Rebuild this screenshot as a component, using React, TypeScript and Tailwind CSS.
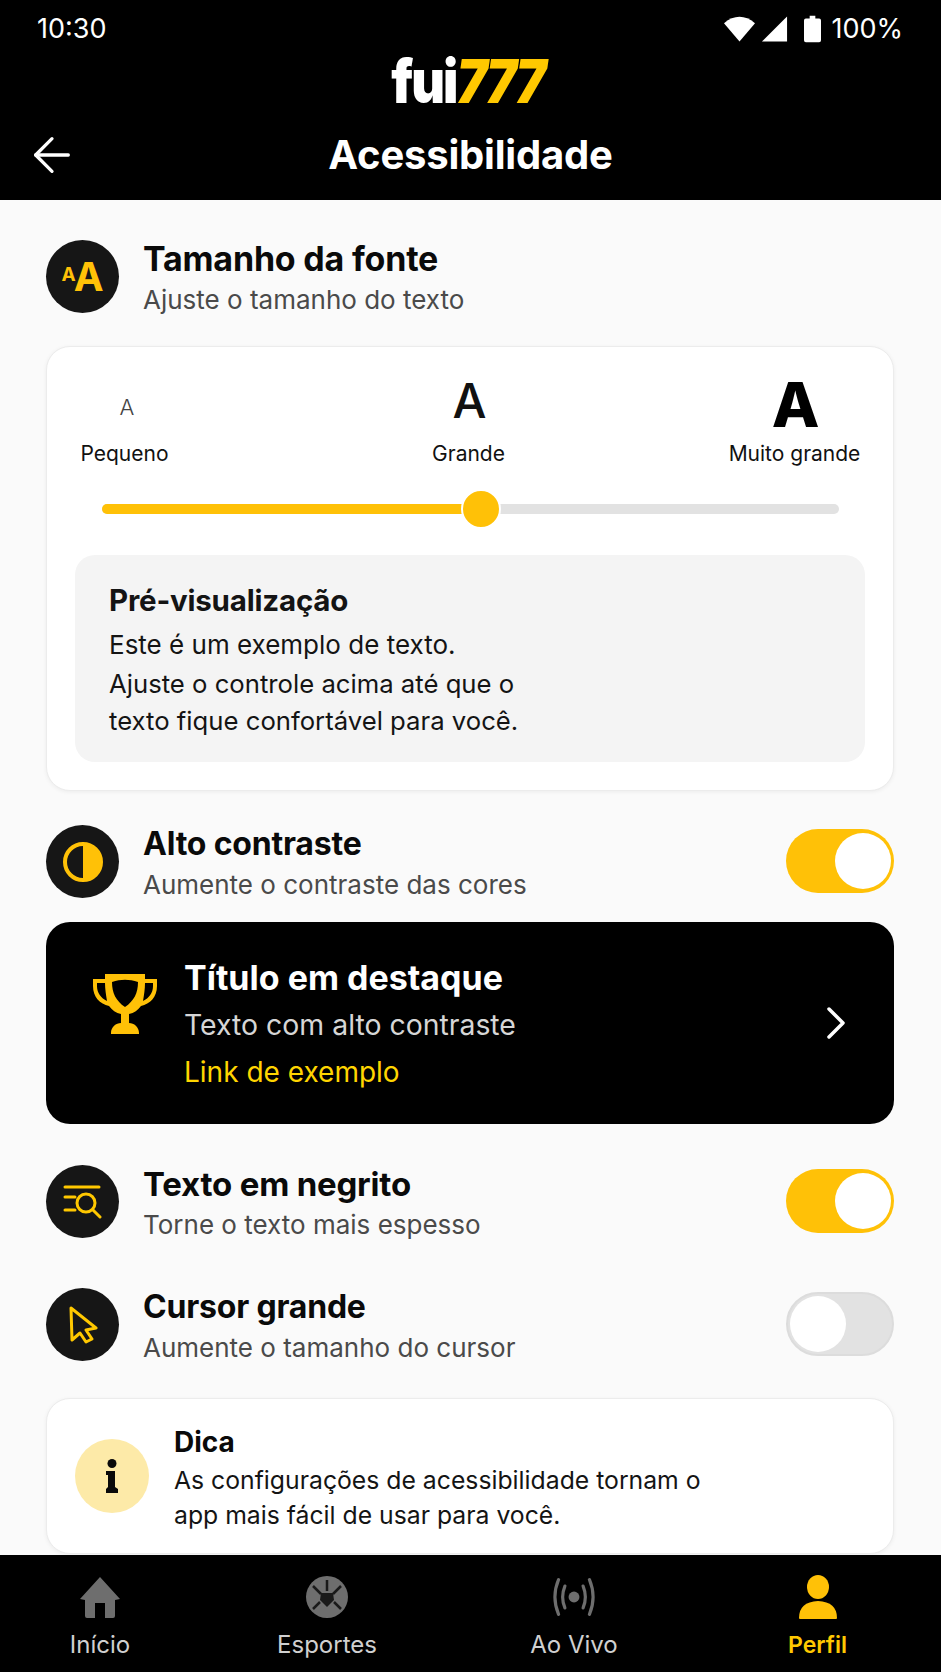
import { ArrowLeft, ChevronRight } from "lucide-react";
import type { ReactNode } from "react";

const IconCircle = ({ children }: { children: ReactNode }) => (
  <div className="flex h-[73px] w-[73px] shrink-0 items-center justify-center rounded-full bg-[#161616]">
    {children}
  </div>
);

const Toggle = ({ on }: { on: boolean }) =>
  on ? (
    <div className="-mt-[2px] flex h-[64px] w-[108px] shrink-0 items-center justify-end rounded-full bg-[#ffc107] pr-[3px]">
      <div className="h-[56px] w-[56px] rounded-full bg-white" />
    </div>
  ) : (
    <div className="-mt-[2px] flex h-[64px] w-[108px] shrink-0 items-center rounded-full border-2 border-[#dcdcdc] bg-[#e2e2e2] pl-[2px]">
      <div className="h-[56px] w-[56px] rounded-full bg-white" />
    </div>
  );

interface SettingRowProps {
  icon: ReactNode;
  title: string;
  titleSize?: string;
  subtitle: string;
  on?: boolean;
  className?: string;
}

const SettingRow = ({ icon, title, titleSize = "text-[33px]", subtitle, on, className = "" }: SettingRowProps) => (
  <div className={`flex h-[73px] items-center ${className}`}>
    <IconCircle>{icon}</IconCircle>
    <div className="ml-[24px] mt-[2px] flex-1">
      <p className={`${titleSize} font-bold leading-[38px] tracking-[-0.2px] text-[#0a0a0a]`}>{title}</p>
      <p className="mt-[6px] text-[26px] leading-[32px] text-[#4a4a4a]">{subtitle}</p>
    </div>
    {on !== undefined && <Toggle on={on} />}
  </div>
);

const navItems = [
  {
    label: "Início",
    color: "text-[24px] text-[#d0d0d0]",
    icon: (
      <svg viewBox="0 0 44 44" className="h-[44px] w-[44px]" fill="#6e6e6e">
        <path d="M22 2 L42 24 L37 25 V41 Q37 43 35 43 H27 V28 H17 V43 H9 Q7 43 7 41 V25 L2 24 Z" />
      </svg>
    ),
  },
  {
    label: "Esportes",
    color: "text-[24px] text-[#d0d0d0]",
    icon: (
      <svg viewBox="0 0 44 44" className="h-[44px] w-[44px]">
        <circle cx="22" cy="22" r="21" fill="#6e6e6e" />
        <path d="M16 18 L28 18 L29 25 L22 32 L15 25 Z" fill="#1a1a1a" />
        <path
          d="M22 5 V16 M8 11 L16 19 M36 11 L28 19 M8 34 L15 27 M36 34 L29 27"
          stroke="#1a1a1a"
          strokeWidth="2.5"
          fill="none"
        />
      </svg>
    ),
  },
  {
    label: "Ao Vivo",
    color: "text-[24px] text-[#d0d0d0]",
    icon: (
      <svg viewBox="0 0 48 44" className="h-[40px] w-[46px]" fill="none" stroke="#6e6e6e" strokeWidth="3.5" strokeLinecap="round">
        <circle cx="24" cy="22" r="6" fill="#6e6e6e" stroke="none" />
        <path d="M14 10 Q9 22 14 34 M34 10 Q39 22 34 34" />
        <path d="M7 3 Q-1 22 7 41 M41 3 Q49 22 41 41" />
      </svg>
    ),
  },
  {
    label: "Perfil",
    color: "text-[23px] text-[#ffc800] font-semibold",
    icon: (
      <svg viewBox="0 0 44 44" className="h-[44px] w-[44px]" fill="#ffc107">
        <ellipse cx="22" cy="12" rx="11" ry="12" />
        <path d="M3 43 Q3 27 22 26 Q41 27 41 43 Q41 44 40 44 H4 Q3 44 3 43 Z" />
      </svg>
    ),
  },
];

export default function App() {
  return (
    <div className="flex h-[1672px] w-[941px] flex-col overflow-hidden bg-[#fafafa] font-['Inter',sans-serif]">
      <header className="relative h-[200px] shrink-0 bg-black text-white">
        <div className="flex items-center justify-between pl-[37px] pr-[38px] pt-[13px]">
          <span className="text-[27px] leading-[32px]">10:30</span>
          <div className="flex items-center">
            <svg viewBox="0 0 34 28" className="h-[28px] w-[33px]" fill="white">
              <path d="M1 8 Q17 -5 33 8 L17 27 Z" />
            </svg>
            <svg viewBox="0 0 28 28" className="ml-[5px] h-[28px] w-[27px]" fill="white">
              <path d="M27 1 V27 H1 Z" />
            </svg>
            <svg viewBox="0 0 18 28" className="ml-[16px] h-[28px] w-[17px]" fill="white">
              <path d="M6 0 H12 V3 H16 Q18 3 18 5 V26 Q18 28 16 28 H2 Q0 28 0 26 V5 Q0 3 2 3 H6 Z" />
            </svg>
            <span className="ml-[10px] text-[27px] leading-[32px]">100%</span>
          </div>
        </div>
        <div className="mt-[8px] flex h-[58px] scale-y-[1.15] items-center justify-center pr-[6px] text-[52px] font-black leading-none tracking-[-2px]">
          <span>fui</span>
          <span className="italic tracking-[-2.5px] text-[#ffc800]">777</span>
        </div>
        <div className="relative mt-[21px] flex h-[46px] items-center justify-center">
          <ArrowLeft className="absolute left-[24px] h-[56px] w-[56px]" strokeWidth={1.4} />
          <h1 className="text-[40px] font-bold tracking-[-0.2px]">Acessibilidade</h1>
        </div>
      </header>

      <main className="flex-1 overflow-hidden pl-[46px] pr-[47px] pt-[40px]">
        <SettingRow
          title="Tamanho da fonte"
          titleSize="text-[34px]"
          subtitle="Ajuste o tamanho do texto"
          icon={
            <div className="flex items-center font-bold text-[#ffc107]">
              <span className="mb-[4px] text-[19px] leading-none">A</span>
              <span className="-ml-[2px] text-[40px] leading-none">A</span>
            </div>
          }
        />

        <section className="mt-[33px] h-[445px] rounded-[24px] border border-[#ececec] bg-white px-[28px] shadow-[0_1px_4px_rgba(0,0,0,0.06)]">
          <div className="flex h-[122px] items-end justify-between pb-[3px] pl-[6px] pr-[3px] text-[21px] text-[#111]">
            <div className="flex w-[87px] flex-col items-center">
              <span className="mb-[22px] ml-[5px] text-[22px] font-light leading-[26px] text-[#444]">A</span>
              <span className="leading-[24px]">Pequeno</span>
            </div>
            <div className="ml-[42px] flex flex-col items-center">
              <span className="mb-[16px] ml-[2px] text-[48px] font-medium leading-[50px]">A</span>
              <span className="leading-[24px]">Grande</span>
            </div>
            <div className="flex w-[135px] flex-col items-center whitespace-nowrap">
              <span className="mb-[6px] ml-[2px] text-[62px] font-extrabold leading-[62px] text-black">A</span>
              <span className="leading-[24px]">Muito grande</span>
            </div>
          </div>

          <div className="relative ml-[27px] mr-[26px] mt-[35px] h-[10px] rounded-full bg-[#e2e2e2]">
            <div className="h-[10px] w-[371px] rounded-full bg-[#ffc107]" />
            <div className="absolute left-[359px] top-[-15px] h-[40px] w-[40px] rounded-full border-2 border-white bg-[#ffc107]" />
          </div>

          <div className="mt-[41px] h-[207px] rounded-[20px] bg-[#f4f4f4] pl-[34px] pt-[28px] text-[26px] text-[#141414]">
            <p className="text-[29.5px] font-bold leading-[34px] tracking-[-0.2px]">Pré-visualização</p>
            <p className="mt-[12px] leading-[32px]">Este é um exemplo de texto.</p>
            <p className="mt-[4px] text-[25.7px] leading-[37px]">
              Ajuste o controle acima até que o
              <br />
              texto fique confortável para você.
            </p>
          </div>
        </section>

        <SettingRow
          className="mt-[34px]"
          title="Alto contraste"
          titleSize="text-[32px]"
          subtitle="Aumente o contraste das cores"
          on
          icon={
            <svg viewBox="0 0 42 42" className="h-[42px] w-[42px]">
              <circle cx="21" cy="21" r="18" fill="none" stroke="#ffc107" strokeWidth="4" />
              <path d="M21 3 A18 18 0 0 1 21 39 Z" fill="#ffc107" />
            </svg>
          }
        />

        <section className="mt-[24px] flex h-[202px] items-center rounded-[24px] bg-black pl-[46px] pr-[30px]">
          <svg viewBox="0 0 66 62" className="mb-[38px] h-[62px] w-[66px] shrink-0" fill="#ffc107">
            <path d="M13 1 H53 V6 H65 V13 C65 24 58 31 49 33 C46 37 42 40 37 41 V50 C42 50 47 54 47 60 V61 H19 V60 C19 54 24 50 29 50 V41 C24 40 20 37 17 33 C8 31 1 24 1 13 V6 H13 Z M5 10 V13 C5 20 9 25 15 28 C14 22 13 16 13 10 Z M61 10 H53 C53 16 52 22 51 28 C57 25 61 20 61 13 Z M20 9 C20 20 24 28 33 34 C42 28 46 20 46 9 C37 6 29 6 20 9 Z" fillRule="evenodd" />
          </svg>
          <div className="ml-[26px] flex-1">
            <p className="-mt-[1px] text-[34px] font-bold leading-[40px] text-white">Título em destaque</p>
            <p className="mt-[11px] text-[28.4px] leading-[32px] text-[#d6d6d6]">Texto com alto contraste</p>
            <p className="mt-[15px] text-[28px] leading-[32px] text-[#ffd500]">Link de exemplo</p>
          </div>
          <ChevronRight className="h-[56px] w-[56px] text-white" strokeWidth={1.5} />
        </section>

        <SettingRow
          className="mt-[41px]"
          title="Texto em negrito"
          subtitle="Torne o texto mais espesso"
          on
          icon={
            <svg viewBox="0 0 40 34" className="h-[34px] w-[40px]" fill="none" stroke="#ffc800" strokeWidth="3" strokeLinecap="round">
              <path d="M2 2 H36 M2 12 H12 M2 25 H12" />
              <circle cx="23" cy="18" r="9" />
              <path d="M30 25 L37 32" />
            </svg>
          }
        />

        <SettingRow
          className="mt-[50px]"
          title="Cursor grande"
          titleSize="text-[32px]"
          subtitle="Aumente o tamanho do cursor"
          on={false}
          icon={
            <svg viewBox="0 0 30 38" className="h-[38px] w-[30px]" fill="none" stroke="#ffc800" strokeWidth="3" strokeLinejoin="round">
              <path d="M3 2 L28 22 L18 24 L24 33 L18 36 L12 27 L4 34 Z" />
            </svg>
          }
        />

        <section className="mt-[37px] flex h-[156px] items-center rounded-[24px] border border-[#ececec] bg-white pl-[28px] shadow-[0_1px_4px_rgba(0,0,0,0.06)]">
          <div className="flex h-[74px] w-[74px] shrink-0 items-center justify-center rounded-full bg-[#fdeaa8]">
            <svg viewBox="0 0 14 34" className="h-[34px] w-[14px]" fill="#0a0a0a">
              <circle cx="7" cy="4.5" r="4.5" />
              <path d="M1 12 H10 V28 L13 30 V34 H1 V30 L3 28 V16 H1 Z" />
            </svg>
          </div>
          <div className="ml-[25px] mt-[4px]">
            <p className="text-[28px] font-bold leading-[36px] text-[#0a0a0a]">Dica</p>
            <p className="mt-[3px] text-[24.75px] leading-[35px] text-[#141414]">
              As configurações de acessibilidade tornam o
              <br />
              app mais fácil de usar para você.
            </p>
          </div>
        </section>
      </main>

      <nav className="grid h-[117px] shrink-0 grid-cols-[200px_254px_240px_247px] bg-black pt-[20px]">
        {navItems.map((item) => (
          <div key={item.label} className="flex flex-col items-center">
            <div className="flex h-[44px] items-center justify-center">{item.icon}</div>
            <span className={`mt-[11px] leading-[30px] ${item.color}`}>{item.label}</span>
          </div>
        ))}
      </nav>
    </div>
  );
}
